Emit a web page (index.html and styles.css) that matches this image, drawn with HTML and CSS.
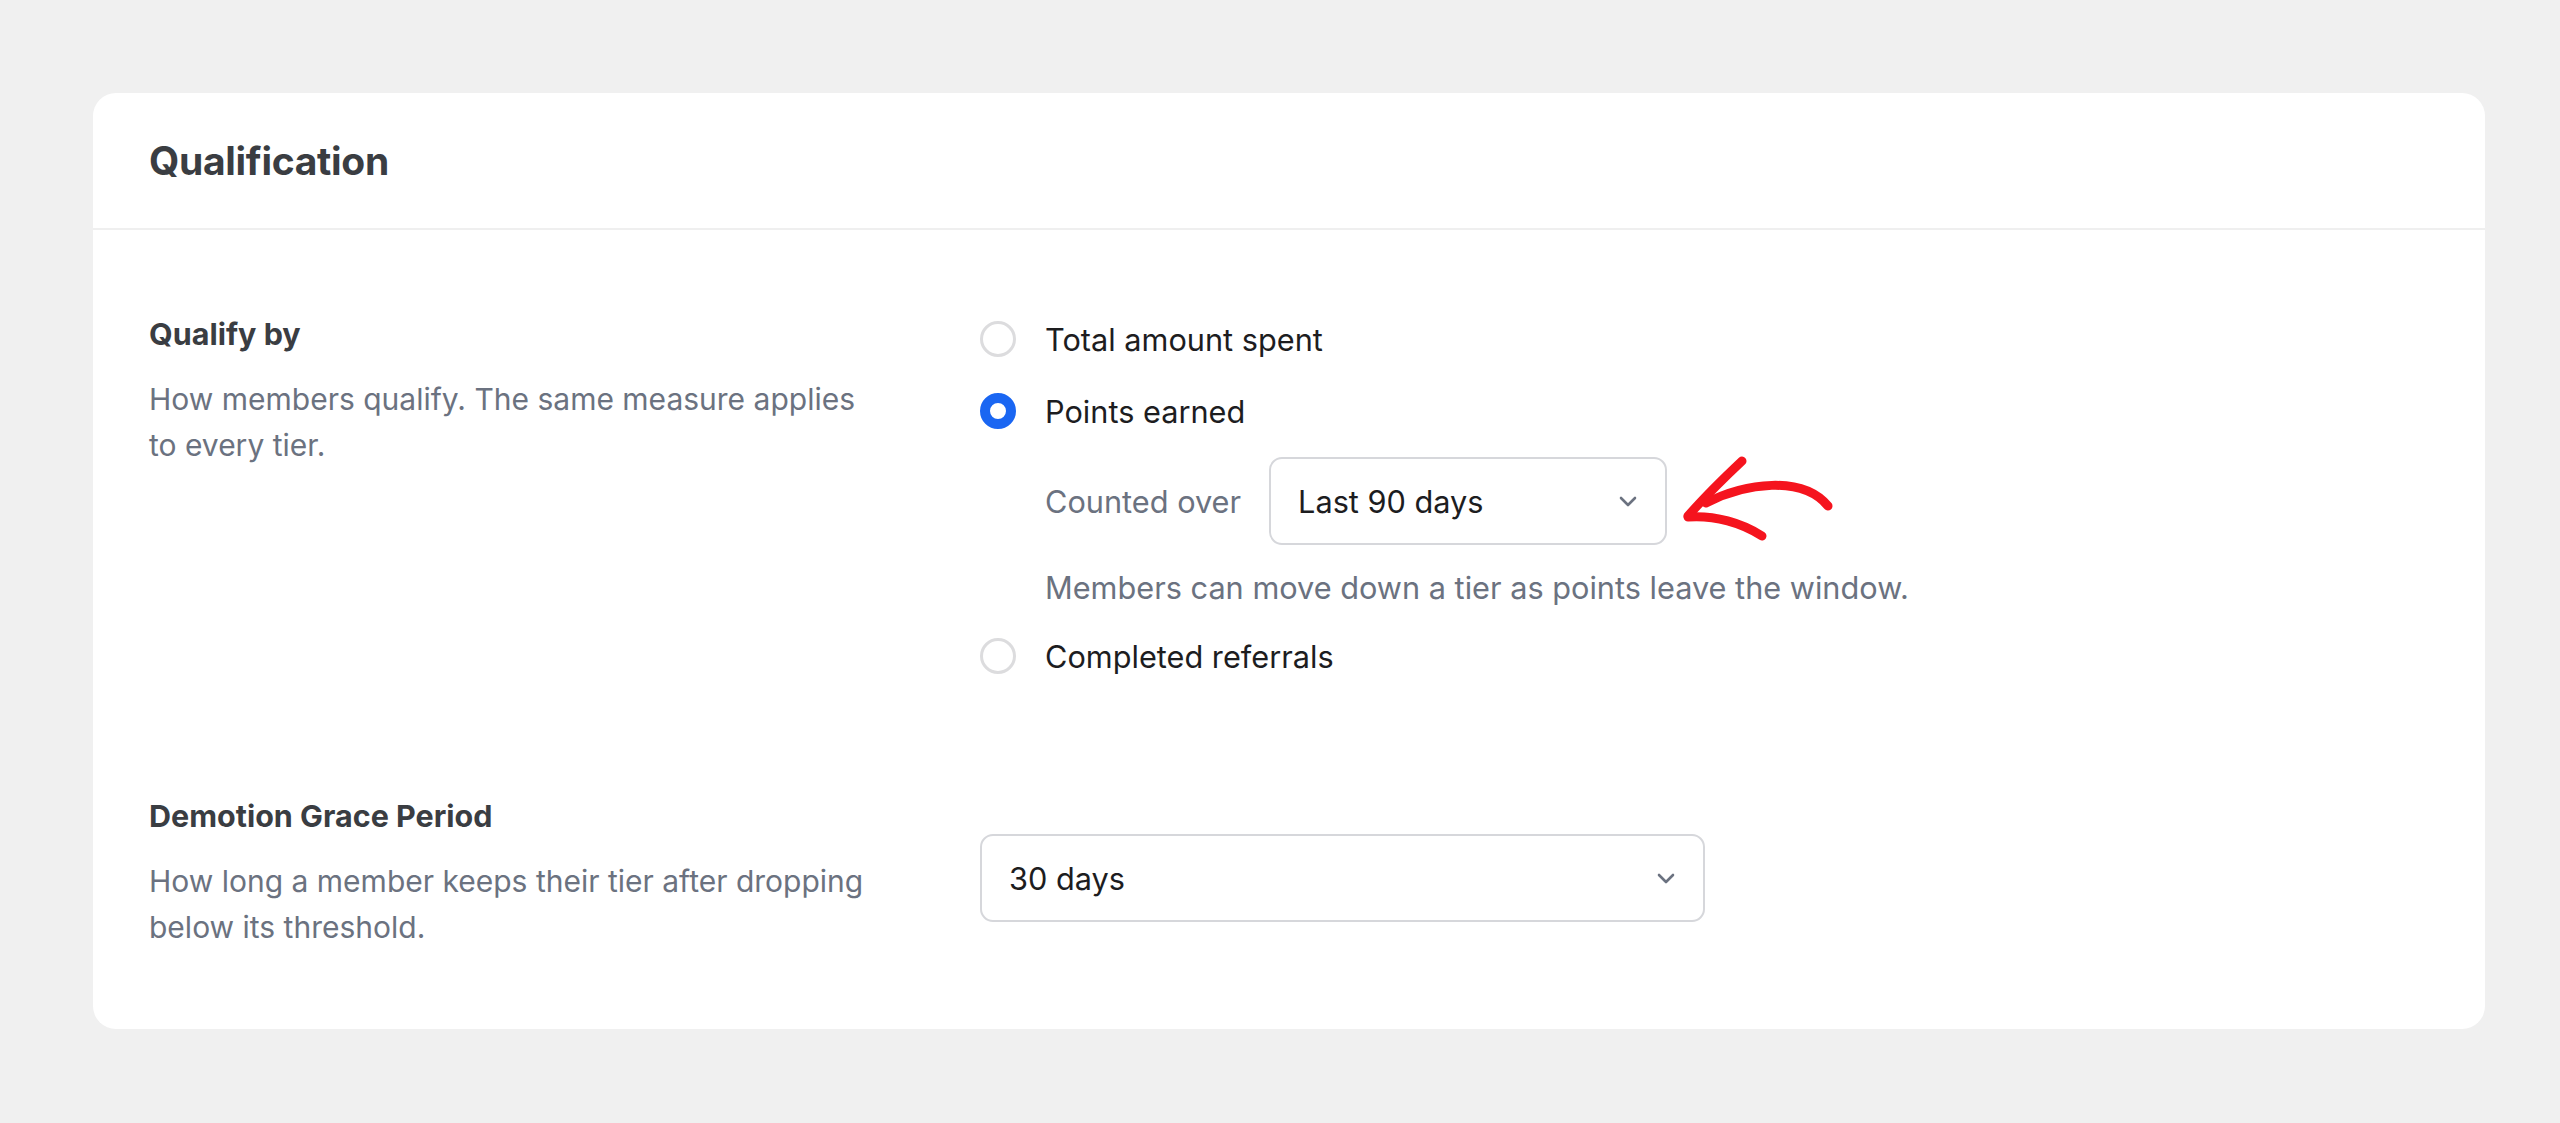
FILE: index.html
```html
<!DOCTYPE html>
<html lang="en">
<head>
<meta charset="utf-8">
<title>Qualification</title>
<link rel="stylesheet" href="styles.css">
</head>
<body>
<div class="page">
  <section class="card">
    <header class="card-header">
      <h2 class="card-title">Qualification</h2>
    </header>
    <div class="card-body">
      <div class="field field-qualify">
        <div class="field-info">
          <div class="field-label">Qualify by</div>
          <p class="field-desc">How members qualify. The same measure applies to every tier.</p>
        </div>
        <div class="field-control">
          <div class="radio-group">
            <label class="radio-option"><span class="radio"></span><span class="radio-text">Total amount spent</span></label>
            <label class="radio-option"><span class="radio radio-checked"></span><span class="radio-text">Points earned</span></label>
            <div class="sub">
              <div class="sub-row">
                <span class="sub-label">Counted over</span>
                <div class="select select-small">
                  <span class="select-value">Last 90 days</span>
                  <svg class="chevron" viewBox="0 0 18 11" width="18" height="11"><path d="M2 2 L9 9 L16 2" fill="none" stroke="#6b7280" stroke-width="2.6" stroke-linecap="round" stroke-linejoin="round"/></svg>
                </div>
                <svg class="annot-arrow" viewBox="0 0 160 90" width="160" height="90">
                  <g fill="none" stroke="#f5141e" stroke-width="9" stroke-linecap="round" stroke-linejoin="round">
                    <path d="M62 8 C 45 24, 28 40, 8 63"/>
                    <path d="M8 64 C 35 62, 62 70, 82 83"/>
                    <path d="M26 50 C 65 30, 122 22, 148 53"/>
                  </g>
                </svg>
              </div>
              <p class="hint">Members can move down a tier as points leave the window.</p>
            </div>
            <label class="radio-option"><span class="radio"></span><span class="radio-text">Completed referrals</span></label>
          </div>
        </div>
      </div>
      <div class="field field-grace">
        <div class="field-info">
          <div class="field-label">Demotion Grace Period</div>
          <p class="field-desc">How long a member keeps their tier after dropping below its threshold.</p>
        </div>
        <div class="field-control">
          <div class="select select-large">
            <span class="select-value">30 days</span>
            <svg class="chevron" viewBox="0 0 18 11" width="18" height="11"><path d="M2 2 L9 9 L16 2" fill="none" stroke="#6b7280" stroke-width="2.6" stroke-linecap="round" stroke-linejoin="round"/></svg>
          </div>
        </div>
      </div>
    </div>
  </section>
</div>
</body>
</html>
```

FILE: styles.css
```css
* { box-sizing: border-box; }
html, body { margin: 0; padding: 0; }
body {
  background: #f0f0f0;
  font-family: Inter, "Noto Sans", "Liberation Sans", sans-serif;
  color: #1d1d1f;
}
.page {
  padding: 93px 75px 93px 93px;
}
.card {
  background: #ffffff;
  border-radius: 23px;
}
.card-header {
  height: 137px;
  display: flex;
  align-items: center;
  padding: 0 56px;
  border-bottom: 2px solid #efefef;
}
.card-title {
  margin: 0;
  font-size: 39px;
  font-weight: 700;
  color: #3a3d42;
  letter-spacing: -0.3px;
}
.card-body {
  padding: 81px 56px 79px 56px;
}
.field {
  display: grid;
  grid-template-columns: 732px 1fr;
  column-gap: 99px;
  align-items: start;
}
.field-grace {
  margin-top: 114px;
}
.field-label {
  font-size: 30.5px;
  font-weight: 700;
  line-height: 46px;
  color: #3a3d42;
}
.field-desc {
  margin: 19px 0 0 0;
  font-size: 30px;
  line-height: 46px;
  color: #6b7280;
}
.field-qualify .field-control {
  padding-top: 5px;
}
.radio-group {
  display: flex;
  flex-direction: column;
}
.radio-option {
  display: flex;
  align-items: center;
  height: 46px;
  font-size: 30.7px;
  color: #1d1d1f;
}
.radio-option + .radio-option {
  margin-top: 26px;
}
.radio {
  width: 36px;
  height: 36px;
  border-radius: 50%;
  border: 3px solid #dcdcde;
  background: #fff;
  flex: none;
  margin-right: 29px;
}
.radio-checked {
  border: 10.5px solid #1a66f2;
  background: #fff;
}
.sub {
  padding-left: 65px;
  margin-top: 23px;
  margin-bottom: 22px;
}
.sub-row {
  position: relative;
  display: flex;
  align-items: center;
}
.sub-label {
  font-size: 30.7px;
  color: #6b7280;
  margin-right: 28px;
}
.select {
  display: flex;
  align-items: center;
  justify-content: space-between;
  height: 88px;
  border: 2px solid #d6d7db;
  border-radius: 13px;
  background: #fff;
  padding: 0 28px 0 27px;
  font-size: 30.7px;
  color: #1d1d1f;
}
.select-small {
  width: 398px;
}
.select-large {
  width: 725px;
  margin-top: 41px;
}
.chevron {
  display: block;
}
.annot-arrow {
  position: absolute;
  left: 635px;
  top: -4px;
}
.hint {
  margin: 20px 0 0 0;
  font-size: 30.7px;
  line-height: 46px;
  color: #6b7280;
}
```
